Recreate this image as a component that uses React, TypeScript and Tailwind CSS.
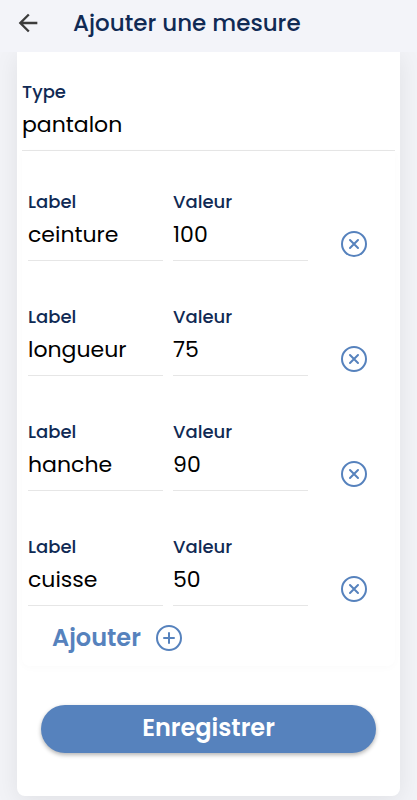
import { useState } from 'react';
import { IoAddCircleOutline, IoCloseCircleOutline } from 'react-icons/io5';
import { MdArrowBack } from 'react-icons/md';

const initialMeasures = [
  { id: 1, label: 'ceinture', value: '100' },
  { id: 2, label: 'longueur', value: '75' },
  { id: 3, label: 'hanche', value: '90' },
  { id: 4, label: 'cuisse', value: '50' },
];

function Field({ id, label, defaultValue }: { id: string; label: string; defaultValue: string }) {
  return (
    <div className="min-w-0">
      <label htmlFor={id} className="block h-6 text-lg leading-6 font-medium text-[#102a54]">
        {label}
      </label>
      <input
        id={id}
        type="text"
        defaultValue={defaultValue}
        className="block h-[47px] w-full border-b border-[#e6e6e6] pb-[6px] text-[22px] text-black outline-none"
      />
    </div>
  );
}

export default function App() {
  const [measures, setMeasures] = useState(initialMeasures);

  const addMeasure = () => setMeasures([...measures, { id: Date.now(), label: '', value: '' }]);
  const removeMeasure = (id: number) => setMeasures(measures.filter((m) => m.id !== id));

  return (
    <div className="min-h-screen bg-[#f2f3f7] font-['Poppins','Inter',sans-serif]">
      {/* Header */}
      <header className="sticky top-0 z-10 flex h-[52px] items-center gap-[31px] bg-[#f3f4f9] px-[14px] pb-[6px]">
        <button type="button" aria-label="Retour" className="text-[#3c3c3c]">
          <MdArrowBack className="size-7" />
        </button>
        <h1 className="text-[23px] font-medium text-[#102a54]">Ajouter une mesure</h1>
      </header>

      <main className="px-[17px] pb-1">
        <form
          onSubmit={(e) => e.preventDefault()}
          className="rounded-b-lg bg-white px-[5px] pt-7 pb-[43px] shadow-[0_4px_24px_rgba(0,0,0,0.08)]"
        >
          <Field id="type" label="Type" defaultValue="pantalon" />

          {/* Measures */}
          <section className="rounded-b-lg pt-[39px] shadow-[0_2px_8px_rgba(0,0,0,0.02)]">
            <div className="flex flex-col gap-11">
              {measures.map((m) => (
                <div key={m.id} className="grid grid-cols-[7fr_7fr_4fr]">
                  <div className="pr-1 pl-[6px]">
                    <Field id={`label-${m.id}`} label="Label" defaultValue={m.label} />
                  </div>
                  <div className="pr-1 pl-[6px]">
                    <Field id={`value-${m.id}`} label="Valeur" defaultValue={m.value} />
                  </div>
                  <div className="flex items-end justify-center pb-px">
                    <button
                      type="button"
                      aria-label="Supprimer"
                      onClick={() => removeMeasure(m.id)}
                      className="text-[#5682bd]"
                    >
                      <IoCloseCircleOutline className="size-8" />
                    </button>
                  </div>
                </div>
              ))}
            </div>
            <div className="flex h-[60px] items-center px-[30px] pt-1">
              <button
                type="button"
                onClick={addMeasure}
                className="flex items-center gap-3 text-2xl font-semibold text-[#5682bd]"
              >
                Ajouter
                <IoAddCircleOutline className="size-8" />
              </button>
            </div>
          </section>

          <div className="px-[19px] pt-[39px]">
            <button
              type="submit"
              className="h-12 w-full rounded-full bg-[#5682bd] pb-[2px] text-2xl font-semibold text-white shadow-[0_2px_4px_rgba(0,0,0,0.3)]"
            >
              Enregistrer
            </button>
          </div>
        </form>
      </main>
    </div>
  );
}
